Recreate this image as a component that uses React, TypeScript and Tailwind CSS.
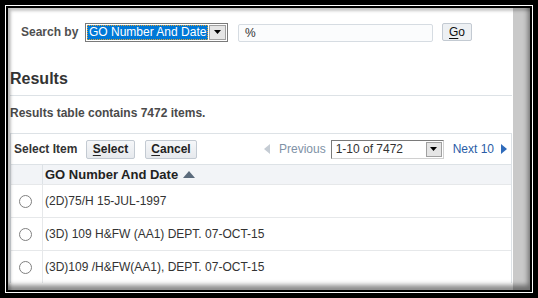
import React from "react";

const font = { fontFamily: '"Liberation Sans", Arial, sans-serif' };

function Radio() {
  return (
    <span className="block w-[13px] h-[13px] rounded-full border border-[#808080] bg-white" />
  );
}

function Row({ text }: { text: string }) {
  return (
    <div className="flex h-[33px] border-t border-[#e6e8ea]">
      <div className="w-[31px] flex items-center pl-[8px]">
        <Radio />
      </div>
      <div className="flex-1 border-l border-[#e6e8ea] flex items-center pl-[2px] text-[12px] text-[#333333]">
        {text}
      </div>
    </div>
  );
}

function Btn({ first, rest, w }: { first: string; rest: string; w: string }) {
  return (
    <div
      className={`${w} h-[19px] flex items-center justify-center rounded-[2px] border border-[#c3cad2] bg-gradient-to-b from-[#f6f7f9] to-[#e6e9ed] text-[12px] font-bold text-[#222]`}
    >
      <span className="underline underline-offset-[2px]">{first}</span>
      <span>{rest}</span>
    </div>
  );
}

export default function App() {
  return (
    <div className="w-[538px] h-[298px] bg-black p-[5px]" style={font}>
      <div className="h-full border border-white bg-black p-[2px]">
        <div className="relative h-full flex bg-white overflow-hidden">
          <div className="flex-1 flex flex-col pl-[2px] pr-[1px]">
            {/* Search row */}
            <div className="mt-[14px] h-[20px] flex items-center">
              <span className="ml-[11px] text-[12px] font-bold text-[#4f4f4f] w-[64px]">
                Search by
              </span>
              <div className="w-[143px] h-[19px] border border-[#7a7a7a] bg-white flex items-center p-[1px]">
                <div className="flex-1 h-full bg-[#0078d7] outline-1 outline-dotted outline-[#e0a030] -outline-offset-1 text-white text-[12px] leading-[15px] pl-[2px] whitespace-nowrap overflow-hidden">
                  GO Number And Date
                </div>
                <div className="w-[17px] h-full ml-[1px] bg-[#e5e5e5] border border-[#a0a0a0] flex items-center justify-center">
                  <svg width="7" height="4" viewBox="0 0 7 4">
                    <path d="M0 0H7L3.5 4Z" fill="#000" />
                  </svg>
                </div>
              </div>
              <div className="ml-[10px] w-[195px] h-[18px] mt-[2px] rounded-[2px] border border-[#d6dce2] bg-[#fbfcfd] text-[12px] text-[#333] pl-[6px] leading-[16px]">
                %
              </div>
              <div className="ml-[9px] w-[30px] h-[18px] flex items-center justify-center rounded-[2px] border border-[#c3cad2] bg-[#edf0f3] text-[12px] text-[#111]">
                <span className="underline underline-offset-[2px]">G</span>o
              </div>
            </div>

            {/* Results heading */}
            <div className="mt-[28px] border-b border-[#dde2e6] pb-[7px]">
              <div className="text-[16px] leading-[18px] font-bold text-[#333]">Results</div>
            </div>

            <div className="mt-[10px] text-[12px] leading-[14px] font-bold text-[#4a4a4a]">
              Results table contains 7472 items.
            </div>

            {/* Table */}
            <div className="mt-[13px] border-t border-l border-r border-[#dde2e6]">
              <div className="h-[30px] flex items-center pl-[3px] pr-[4px]">
                <span className="text-[12px] font-bold text-[#333] w-[72px]">Select Item</span>
                <Btn first="S" rest="elect" w="w-[49px]" />
                <div className="w-[10px]" />
                <Btn first="C" rest="ancel" w="w-[52px]" />
                <div className="flex-1" />
                <svg width="6" height="10" viewBox="0 0 6 10" className="mr-[9px]">
                  <path d="M6 0V10L0 5Z" fill="#c5ccd4" />
                </svg>
                <span className="text-[12px] text-[#8092a6]">Previous</span>
                <div className="ml-[5px] w-[113px] h-[19px] border border-[#7a7a7a] border-r-[#d0d0d0] border-b-[#d0d0d0] bg-white flex items-center">
                  <span className="flex-1 pl-[4px] text-[12px] text-[#333]">1-10 of 7472</span>
                  <div className="w-[16px] h-[15px] mr-[1px] bg-[#e5e5e5] border border-[#a0a0a0] flex items-center justify-center">
                    <svg width="7" height="4" viewBox="0 0 7 4">
                      <path d="M0 0H7L3.5 4Z" fill="#000" />
                    </svg>
                  </div>
                </div>
                <span className="ml-[9px] text-[12px] text-[#2a5da6]">Next 10</span>
                <svg width="6" height="10" viewBox="0 0 6 10" className="ml-[7px]">
                  <path d="M0 0V10L6 5Z" fill="#2f6bbb" />
                </svg>
              </div>
              <div className="h-[20px] flex border-t border-[#dde2e6] bg-[#f2f4f7]">
                <div className="w-[31px]" />
                <div className="flex-1 border-l border-[#dde2e6] flex items-center pl-[2px] text-[13px] font-bold text-[#222]">
                  GO Number And Date
                  <svg width="12" height="7" viewBox="0 0 12 7" className="ml-[5px]">
                    <path d="M0 7L6 0L12 7Z" fill="#5b6b7c" />
                  </svg>
                </div>
              </div>
              <Row text="(2D)75/H 15-JUL-1997" />
              <Row text="(3D) 109 H&FW (AA1) DEPT. 07-OCT-15" />
              <Row text="(3D)109 /H&FW(AA1), DEPT. 07-OCT-15" />
            </div>
          </div>
          <div className="w-[17px] bg-[#c9c9c9]" />
          <div className="pointer-events-none absolute inset-0 shadow-[inset_3px_3px_3px_rgba(0,0,0,0.22),inset_-2px_-5px_5px_rgba(0,0,0,0.45)]" />
        </div>
      </div>
    </div>
  );
}
